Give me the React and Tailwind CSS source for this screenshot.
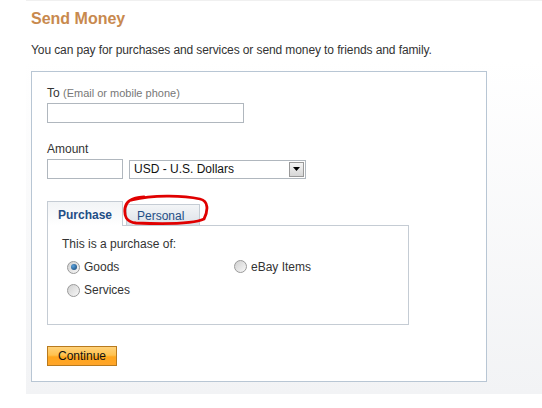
import React from "react";

function Radio({ checked }) {
  return (
    <span className="relative inline-block w-[13px] h-[13px] rounded-full border border-[#9a9a9a] bg-[linear-gradient(135deg,#d0d0d0,#f8f8f8)] shrink-0">
      {checked && (
        <span className="absolute left-[2.5px] top-[2.5px] w-[6px] h-[6px] rounded-full bg-[radial-gradient(circle_at_35%_35%,#5aa2dc,#123f6e)]" />
      )}
    </span>
  );
}

export default function App() {
  return (
    <div className="w-[542px] h-[408px] bg-white font-['Liberation_Sans',Arial,sans-serif] text-[#333]">
      <div className="ml-[26px] h-[394px] border-t border-[#f0f0f0] bg-[linear-gradient(180deg,#ffffff_0%,#ffffff_15%,#f2f3f5_100%)] pl-[5px]">
        <div className="bg-white -ml-[5px] pl-[5px] w-[461px]">
          <h1 className="pt-[8px] text-[16px] leading-[20px] font-bold text-[#c8894e]">Send Money</h1>
          <p className="mt-[14px] text-[12px] leading-[14px] text-[#333] tracking-[-0.1px]">
            You can pay for purchases and services or send money to friends and family.
          </p>
        </div>
        <div className="mt-[14px] w-[456px] h-[311px] border border-[#b8c6d4] bg-white px-[15px] pt-[14px] relative">
          <div className="text-[12px] leading-[14px]">
            To <span className="text-[11px] text-[#777]">(Email or mobile phone)</span>
          </div>
          <div className="mt-[3px] w-[197px] h-[20px] border border-[#b0b7be]" />
          <div className="mt-[19px] text-[12px] leading-[14px]">Amount</div>
          <div className="mt-[3px] flex items-center gap-[6px]">
            <div className="w-[76px] h-[20px] border border-[#b0b7be]" />
            <div className="w-[177px] h-[19px] border border-[#b0b7be] flex items-center justify-between">
              <span className="pl-[4px] text-[12px] leading-[14px] text-[#111]">USD - U.S. Dollars</span>
              <span className="w-[15px] h-[15px] mr-[1px] border border-[#999] bg-[linear-gradient(180deg,#f4f4f4,#d6d6d6)] flex items-center justify-center">
                <svg width="7" height="4" viewBox="0 0 7 4"><path d="M0 0h7L3.5 4z" fill="#000" /></svg>
              </span>
            </div>
          </div>
          <div className="mt-[22px] flex items-end">
            <div className="w-[76px] h-[25px] border border-b-0 border-[#c5ccd4] bg-[linear-gradient(180deg,#f2f4f6,#ffffff)] text-[12px] font-bold text-[#1f4e86] pl-[10px] pt-[4px] relative z-10 -mb-px">
              Purchase
            </div>
            <div className="ml-[3px] w-[74px] h-[21px] border border-b-0 border-[#c5ccd4] bg-[linear-gradient(180deg,#f3f5f7,#dde2e8)] text-[12px] text-[#1f4e86] pl-[10px] pt-[4px] leading-[14px]">
              Personal
            </div>
          </div>
          <div className="w-[362px] h-[100px] border border-[#c5ccd4] pl-[14px] pt-[11px] text-[12px] leading-[14px]">
            <div>This is a purchase of:</div>
            <div className="mt-[9px] flex">
              <div className="flex flex-col gap-[9px] w-[172px] pl-[5px]">
                <label className="flex items-center gap-[4px]"><Radio checked /> Goods</label>
                <label className="flex items-center gap-[4px]"><Radio /> Services</label>
              </div>
              <label className="flex items-start gap-[4px] h-[14px]"><Radio /> eBay Items</label>
            </div>
          </div>
          <button className="mt-[21px] w-[70px] h-[20px] border border-[#b87a1e] bg-[linear-gradient(180deg,#ffd27a_0%,#ffc24f_45%,#ffa61c_55%,#ffa52a_100%)] text-[12px] leading-[14px] text-[#111]">
            Continue
          </button>
          <svg className="absolute left-[90px] top-[122px]" width="90" height="32" viewBox="0 0 90 32" fill="none">
            <path d="M10 6 C30 1, 60 1, 78 5 C87 7, 86 17, 82 25 C72 30, 40 30, 14 29 C4 28, 2 22, 3 14 C4 8, 8 4, 22 3" stroke="#e00000" strokeWidth="2.8" strokeLinecap="round" />
          </svg>
        </div>
      </div>
    </div>
  );
}
